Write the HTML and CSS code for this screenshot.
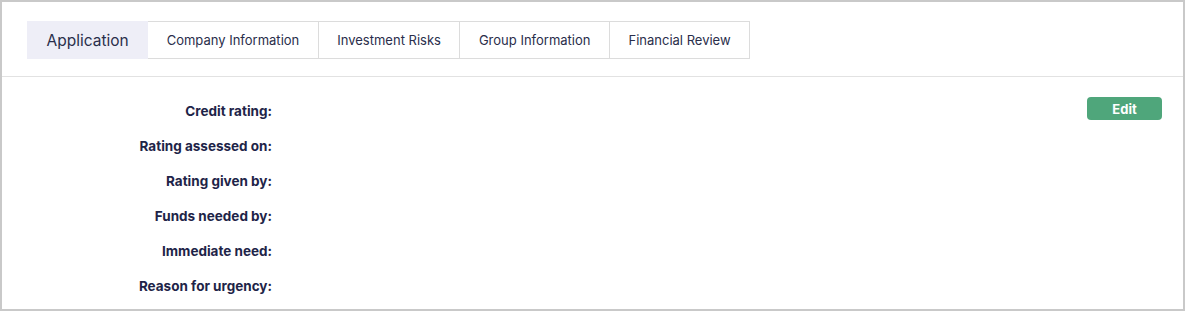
FILE: index.html
```html
<!DOCTYPE html>
<html lang="en">
<head>
    <meta charset="UTF-8">
    <meta name="viewport" content="width=device-width, initial-scale=1.0">
    <title>Application</title>
    <link rel="stylesheet" href="styles.css">
</head>
<body>
    <div class="panel">
        <!-- Tabs -->
        <div class="tab-bar">
            <nav class="tabs">
                <a class="tab active" href="#">Application</a>
                <a class="tab" href="#">Company Information</a>
                <a class="tab" href="#">Investment Risks</a>
                <a class="tab" href="#">Group Information</a>
                <a class="tab" href="#">Financial Review</a>
            </nav>
        </div>

        <!-- Details -->
        <section class="details">
            <div class="fields">
                <div class="field"><span class="field-label">Credit rating:</span></div>
                <div class="field"><span class="field-label">Rating assessed on:</span></div>
                <div class="field"><span class="field-label">Rating given by:</span></div>
                <div class="field"><span class="field-label">Funds needed by:</span></div>
                <div class="field"><span class="field-label">Immediate need:</span></div>
                <div class="field"><span class="field-label">Reason for urgency:</span></div>
            </div>
            <div class="actions">
                <button class="edit-btn">Edit</button>
            </div>
        </section>
    </div>
</body>
</html>
```

FILE: styles.css
```css
/* Reset */
* {
    margin: 0;
    padding: 0;
    box-sizing: border-box;
}

body {
    font-family: Inter, "Noto Sans", sans-serif;
    background-color: #fff;
    color: #1f2547;
}

.panel {
    width: 1185px;
    height: 311px;
    border: 2px solid #c9c9c9;
    background: #fff;
}

/* Tab Styles */
.tab-bar {
    padding: 19px 25px 17px;
    border-bottom: 1px solid #e2e2e2;
}

.tabs {
    display: flex;
}

.tab {
    display: flex;
    align-items: center;
    height: 38px;
    padding: 0 18.5px;
    border: 1px solid #dcdcdc;
    border-left: none;
    color: #2a2e4b;
    font-size: 13px;
    text-decoration: none;
}

.tab:first-child {
    border-left: 1px solid #dcdcdc;
}

.tab.active {
    background-color: #eeeef7;
    border-color: #eeeef7;
    font-size: 15.5px;
    padding: 0 18.5px;
}

/* Details */
.details {
    display: flex;
    padding: 16px 21px 0 0;
}

.field {
    height: 35px;
    display: flex;
    align-items: center;
}

.field-label {
    width: 270px;
    text-align: right;
    font-size: 13.5px;
    font-weight: 700;
    color: #1e2448;
}

.actions {
    margin-left: auto;
    padding-top: 4px;
}

.edit-btn {
    width: 75px;
    height: 23px;
    background-color: #4fa67b;
    color: #fff;
    border: none;
    border-radius: 4px;
    font-family: Inter, "Noto Sans", sans-serif;
    font-size: 13px;
    font-weight: 700;
    cursor: pointer;
}
```
